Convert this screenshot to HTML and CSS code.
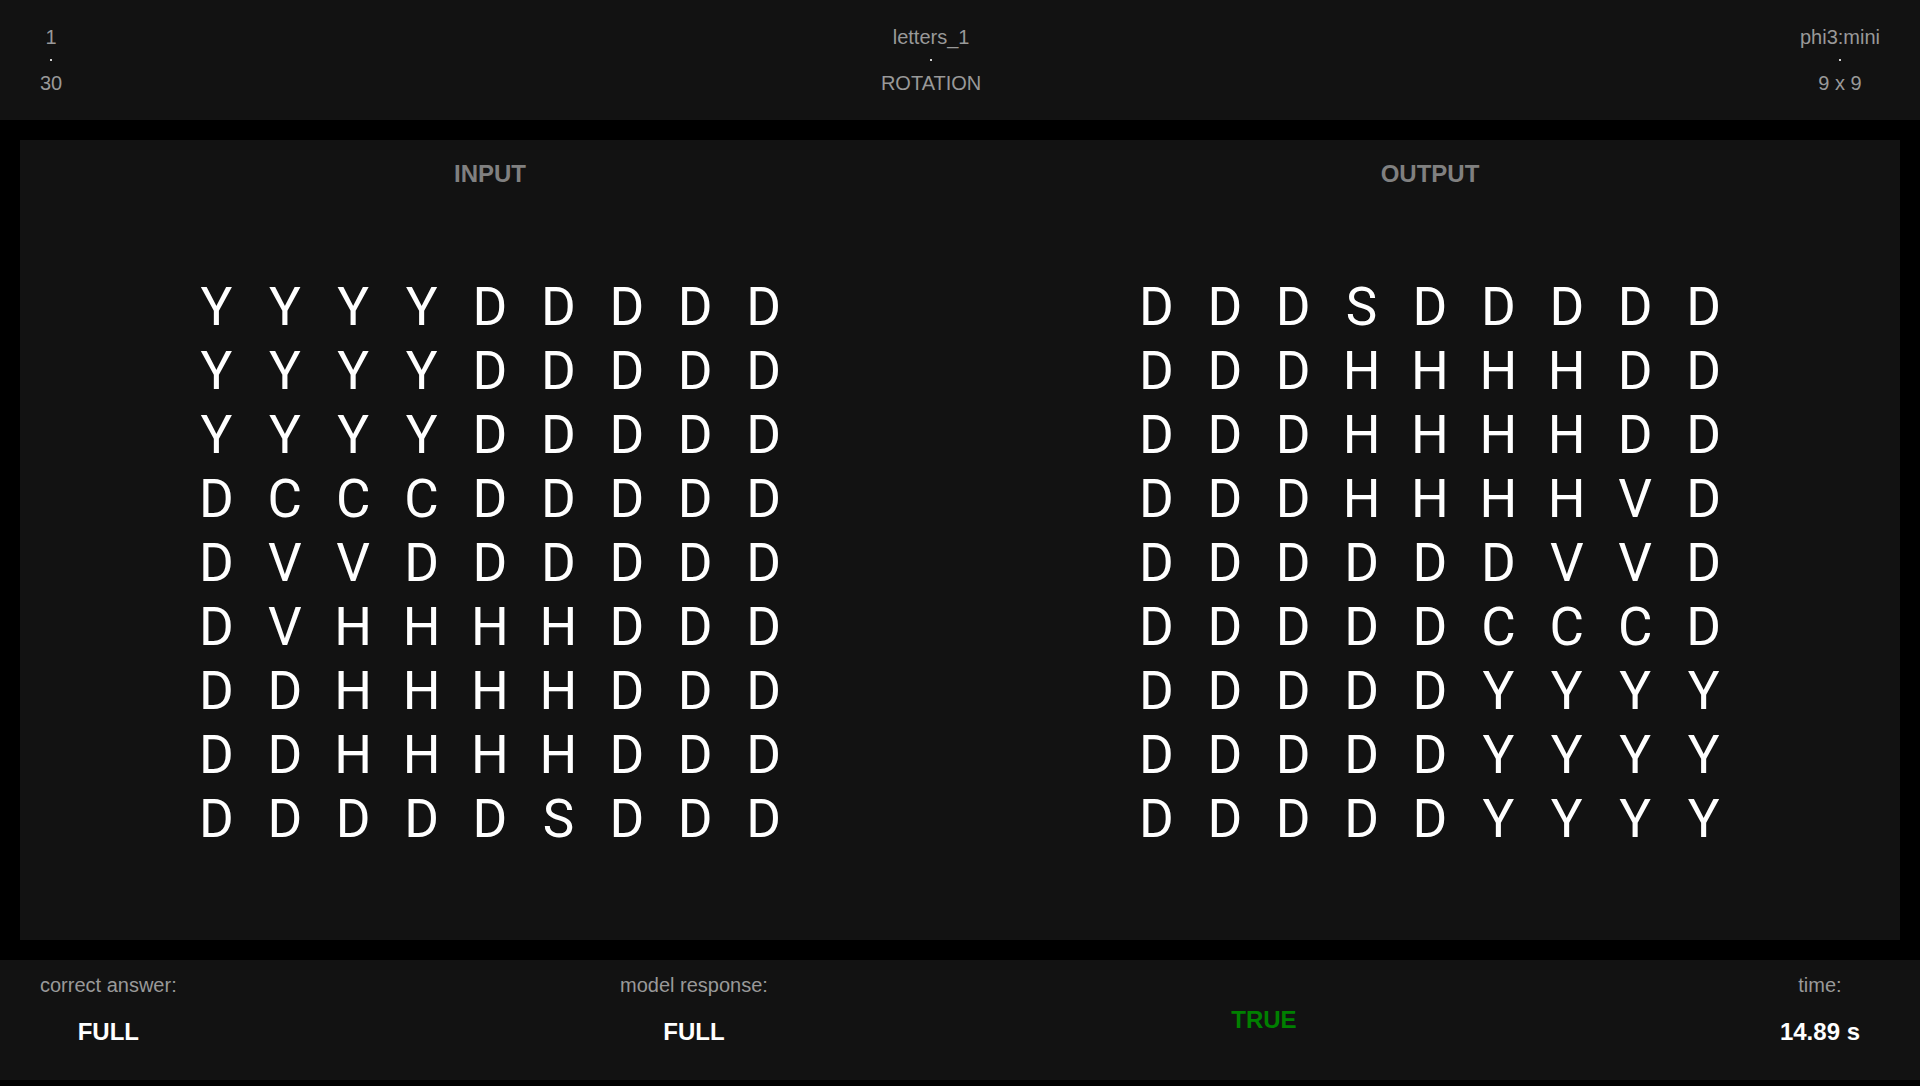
FILE: index.html
```html
<!DOCTYPE html>
<html lang="en">
<head>
<meta charset="utf-8">
<title>letters_1 - ROTATION</title>
<link rel="stylesheet" href="styles.css">
</head>
<body>
<header class="top-bar">
  <div class="meta">
    <div class="meta-line">1</div>
    <div class="meta-dot"></div>
    <div class="meta-line">30</div>
  </div>
  <div class="meta">
    <div class="meta-line">letters_1</div>
    <div class="meta-dot"></div>
    <div class="meta-line">ROTATION</div>
  </div>
  <div class="meta">
    <div class="meta-line">phi3:mini</div>
    <div class="meta-dot"></div>
    <div class="meta-line">9 x 9</div>
  </div>
</header>

<main class="panel">
  <section class="side">
    <h2 class="side-title">INPUT</h2>
    <div class="grid-wrap">
      <div class="letter-grid">
        <span>Y</span><span>Y</span><span>Y</span><span>Y</span><span>D</span><span>D</span><span>D</span><span>D</span><span>D</span>
        <span>Y</span><span>Y</span><span>Y</span><span>Y</span><span>D</span><span>D</span><span>D</span><span>D</span><span>D</span>
        <span>Y</span><span>Y</span><span>Y</span><span>Y</span><span>D</span><span>D</span><span>D</span><span>D</span><span>D</span>
        <span>D</span><span>C</span><span>C</span><span>C</span><span>D</span><span>D</span><span>D</span><span>D</span><span>D</span>
        <span>D</span><span>V</span><span>V</span><span>D</span><span>D</span><span>D</span><span>D</span><span>D</span><span>D</span>
        <span>D</span><span>V</span><span>H</span><span>H</span><span>H</span><span>H</span><span>D</span><span>D</span><span>D</span>
        <span>D</span><span>D</span><span>H</span><span>H</span><span>H</span><span>H</span><span>D</span><span>D</span><span>D</span>
        <span>D</span><span>D</span><span>H</span><span>H</span><span>H</span><span>H</span><span>D</span><span>D</span><span>D</span>
        <span>D</span><span>D</span><span>D</span><span>D</span><span>D</span><span>S</span><span>D</span><span>D</span><span>D</span>
      </div>
    </div>
  </section>
  <section class="side">
    <h2 class="side-title">OUTPUT</h2>
    <div class="grid-wrap">
      <div class="letter-grid">
        <span>D</span><span>D</span><span>D</span><span>S</span><span>D</span><span>D</span><span>D</span><span>D</span><span>D</span>
        <span>D</span><span>D</span><span>D</span><span>H</span><span>H</span><span>H</span><span>H</span><span>D</span><span>D</span>
        <span>D</span><span>D</span><span>D</span><span>H</span><span>H</span><span>H</span><span>H</span><span>D</span><span>D</span>
        <span>D</span><span>D</span><span>D</span><span>H</span><span>H</span><span>H</span><span>H</span><span>V</span><span>D</span>
        <span>D</span><span>D</span><span>D</span><span>D</span><span>D</span><span>D</span><span>V</span><span>V</span><span>D</span>
        <span>D</span><span>D</span><span>D</span><span>D</span><span>D</span><span>C</span><span>C</span><span>C</span><span>D</span>
        <span>D</span><span>D</span><span>D</span><span>D</span><span>D</span><span>Y</span><span>Y</span><span>Y</span><span>Y</span>
        <span>D</span><span>D</span><span>D</span><span>D</span><span>D</span><span>Y</span><span>Y</span><span>Y</span><span>Y</span>
        <span>D</span><span>D</span><span>D</span><span>D</span><span>D</span><span>Y</span><span>Y</span><span>Y</span><span>Y</span>
      </div>
    </div>
  </section>
</main>

<footer class="bottom-bar">
  <div class="stat">
    <div class="stat-label">correct answer:</div>
    <div class="stat-value">FULL</div>
  </div>
  <div class="stat">
    <div class="stat-label">model response:</div>
    <div class="stat-value">FULL</div>
  </div>
  <div class="verdict">TRUE</div>
  <div class="stat stat-padded">
    <div class="stat-label">time:</div>
    <div class="stat-value">14.89 s</div>
  </div>
</footer>
</body>
</html>
```

FILE: styles.css
```css
html, body {
  margin: 0;
  padding: 0;
}

body {
  background: #000;
  font-family: "Liberation Sans", Arial, sans-serif;
  color: #fff;
  width: 1920px;
  height: 1086px;
  overflow: hidden;
}

.top-bar {
  height: 120px;
  box-sizing: border-box;
  background: #121212;
  padding: 0 40px;
  display: flex;
  justify-content: space-between;
  align-items: center;
}

.meta {
  display: flex;
  flex-direction: column;
  align-items: center;
  color: #999;
  font-size: 20px;
  line-height: 23px;
}

.meta-dot {
  width: 2px;
  height: 2px;
  margin: 10px 0 11px;
  background: #d0d0d0;
}

.panel {
  margin: 20px;
  height: 800px;
  background: #121212;
  display: flex;
}

.side {
  flex: 1;
  display: flex;
  flex-direction: column;
}

.side-title {
  margin: 0;
  padding-top: 20px;
  text-align: center;
  font-size: 24px;
  font-weight: bold;
  line-height: 28px;
  color: #808080;
}

.grid-wrap {
  flex: 1;
  display: flex;
  align-items: center;
  justify-content: center;
  padding-bottom: 2px;
}

.letter-grid {
  display: grid;
  grid-template-columns: repeat(9, 68.4px);
  grid-auto-rows: 64px;
  font-family: Roboto, "Noto Sans", sans-serif;
  font-weight: 400;
  font-size: 53px;
  line-height: 64px;
  color: #fff;
  text-align: center;
}

.bottom-bar {
  height: 120px;
  box-sizing: border-box;
  background: #121212;
  padding: 0 40px;
  display: flex;
  justify-content: space-between;
  align-items: flex-start;
}

.stat {
  margin-top: 14px;
  display: flex;
  flex-direction: column;
  align-items: center;
}

.stat-padded {
  padding: 0 20px;
}

.stat-label {
  color: #999;
  font-size: 20px;
  line-height: 23px;
}

.stat-value {
  margin-top: 21px;
  color: #fff;
  font-size: 24px;
  font-weight: bold;
  line-height: 28px;
}

.verdict {
  align-self: center;
  padding: 0 20px;
  color: #008000;
  font-size: 24px;
  font-weight: bold;
  line-height: 28px;
}
```
